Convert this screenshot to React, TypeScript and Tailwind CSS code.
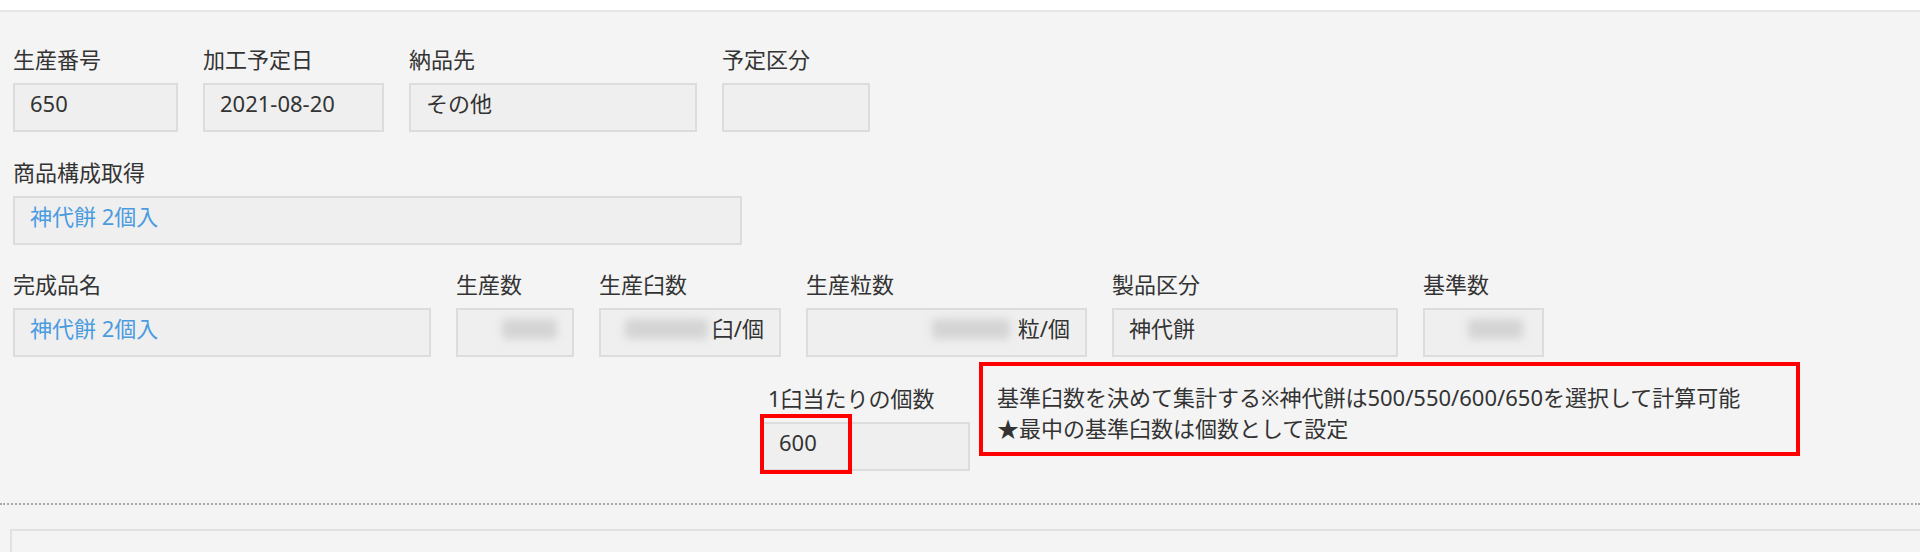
import React from "react";

const Label: React.FC<React.PropsWithChildren<{ className?: string }>> = ({
  children,
  className = "",
}) => (
  <div className={`mb-[12px] h-[24px] whitespace-nowrap leading-[24px] ${className}`}>
    {children}
  </div>
);

const Box: React.FC<
  React.PropsWithChildren<{ className?: string; right?: boolean }>
> = ({ children, className = "", right }) => (
  <div
    className={`flex h-[49px] items-start border-2 border-[#dcdcdc] bg-[#efefef] pt-[6px] leading-[24px] ${
      right ? "justify-end pr-[15px]" : "pl-[15px]"
    } ${className}`}
  >
    {children}
  </div>
);

// 伏せ字（ぼかし）
const Blur: React.FC<{ w: string }> = ({ w }) => (
  <div className={`mt-[3px] h-[20px] rounded-sm bg-[#d4d4d4] blur-[4px] ${w}`} />
);

const Field: React.FC<
  React.PropsWithChildren<{ label: string; w: string; right?: boolean }>
> = ({ label, w, right, children }) => (
  <div className={w}>
    <Label>{label}</Label>
    <Box right={right}>{children}</Box>
  </div>
);

export default function App() {
  return (
    <div className="min-h-[552px] bg-white font-['Noto_Sans','Noto_Sans_CJK_JP',sans-serif] text-[22px] text-[#333]">
      <div className="h-[10px] bg-white" />
      <div className="border-t-2 border-[#e6e6e6] bg-[#f4f4f4]">
        <div className="pl-[13px] pt-[35px]">
          <div className="flex gap-[25px]">
            <Field label="生産番号" w="w-[165px]">650</Field>
            <Field label="加工予定日" w="w-[181px]">2021-08-20</Field>
            <Field label="納品先" w="w-[288px]">その他</Field>
            <Field label="予定区分" w="w-[148px]" />
          </div>

          <div className="mt-[28px]">
            <Field label="商品構成取得" w="w-[729px]">
              <span className="text-[#4b9be0]">神代餅 2個入</span>
            </Field>
          </div>

          <div className="mt-[27px] flex gap-[25px]">
            <Field label="完成品名" w="w-[418px]">
              <span className="text-[#4b9be0]">神代餅 2個入</span>
            </Field>
            <Field label="生産数" w="w-[118px]" right>
              <Blur w="w-[55px]" />
            </Field>
            <Field label="生産臼数" w="w-[182px]" right>
              <Blur w="w-[83px]" />
              <span className="ml-[4px]">臼/個</span>
            </Field>
            <Field label="生産粒数" w="w-[281px]" right>
              <Blur w="w-[78px]" />
              <span className="ml-[8px]">粒/個</span>
            </Field>
            <Field label="製品区分" w="w-[286px]">神代餅</Field>
            <Field label="基準数" w="w-[121px]" right>
              <div className="pr-[4px]">
                <Blur w="w-[55px]" />
              </div>
            </Field>
          </div>

          <div className="mt-[5px] flex items-start pl-[749px]">
            <div className="mt-[24px] w-[208px]">
              <Label className="pl-[6px]">1臼当たりの個数</Label>
              <div className="relative">
                <Box className="h-[48px]">600</Box>
                <div className="absolute -left-[2px] -top-[8px] h-[60px] w-[92px] border-4 border-[#ff0000]" />
              </div>
            </div>
            <div className="ml-[9px] w-[821px] border-4 border-[#ff0000] pb-[8px] pl-[14px] pt-[16px] leading-[31px]">
              <div className="whitespace-nowrap">
                基準臼数を決めて集計する※神代餅は500/550/600/650を選択して計算可能
              </div>
              <div className="whitespace-nowrap">★最中の基準臼数は個数として設定</div>
            </div>
          </div>
        </div>

        <div className="mt-[32px] border-t-2 border-dotted border-[#a8a8a8]" />
        <div className="ml-[10px] mt-[24px] h-[40px] border-2 border-r-0 border-b-0 border-[#e2e2e2]" />
      </div>
    </div>
  );
}
